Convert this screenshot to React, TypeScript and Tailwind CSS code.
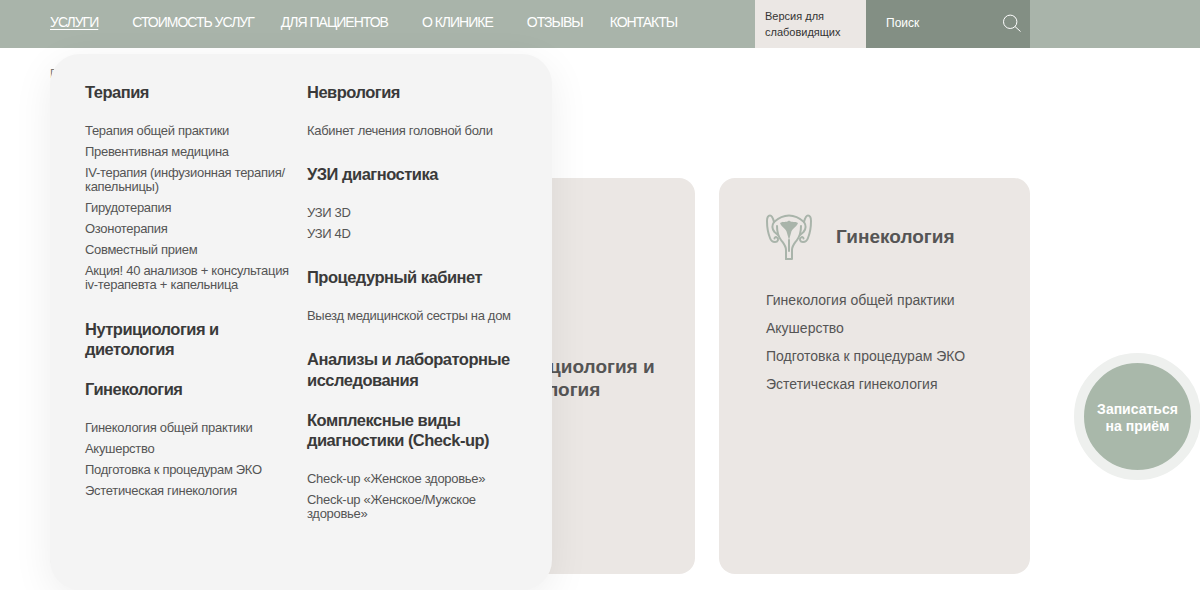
import React from "react";

const font = "font-['Liberation_Sans',sans-serif]";

const UterusIcon = () => (
  <svg width="46" height="48" viewBox="0 0 46 48" fill="none" stroke="#a9b4aa" strokeWidth="2" strokeLinecap="round" strokeLinejoin="round">
    <path d="M8 9C13 4.500 18 2.500 23 2.500S33 4.500 38 9" />
    <path d="M20 46h6v-9c0-4 2-6 5-10 3-4 4-8 4-14" />
    <path d="M20 46v-9c0-4-2-6-5-10-3-4-4-8-4-14" />
    <path d="M23 27v11" />
    <path d="M14 10c3-2 6 0 9-2.500 3 2.500 6 .5 9 2.500-2 5-6 5-7 10l-2 7-2-7c-1-5-5-5-7-10z" fill="#a9b4aa" stroke="none" />
    <path d="M8 9C7 5 6 2.500 4 2.500 2 2.500 1 5 1 8c0 6 1 12 3 17 1 3 3 4 5 4 3 0 4-3 2-4.500-1-1-2.500-.5-2.500 1" />
    <path d="M8 9c-2 3-2 7 .5 10l3.500 3" />
    <path d="M38 9c1-4 2-6.500 4-6.500 2 0 3 2.500 3 5.500 0 6-1 12-3 17-1 3-3 4-5 4-3 0-4-3-2-4.500 1-1 2.500-.5 2.500 1" />
    <path d="M38 9c2 3 2 7-.5 10l-3.500 3" />
  </svg>
);

const SearchIcon = () => (
  <svg width="18" height="18" viewBox="0 0 18 18" fill="none" stroke="#ffffff" strokeWidth="1">
    <circle cx="7.200" cy="7.800" r="6.700" />
    <path d="M12 12.500l5.500 5" />
  </svg>
);

const Heading = ({ children, className = "" }: { children: React.ReactNode; className?: string }) => (
  <h3 className={`text-[16.5px] font-bold tracking-[-0.5px] text-[#3a3a3a] ${className}`}>{children}</h3>
);

const Links = ({ items, className = "" }: { items: string[]; className?: string }) => (
  <ul className={`flex max-w-[212px] flex-col gap-[7px] text-[13px] leading-[14px] tracking-[-0.3px] text-[#555555] ${className}`}>
    {items.map((item) => (
      <li key={item}>{item}</li>
    ))}
  </ul>
);

const gyn = ["Гинекология общей практики", "Акушерство", "Подготовка к процедурам ЭКО", "Эстетическая гинекология"];

const ServicesMenu = () => (
  <div className="absolute left-[50px] top-[54px] z-10 flex h-[536px] w-[502px] rounded-[30px] bg-[#f4f4f4] pl-[35px] pt-[28px] shadow-[0_10px_40px_rgba(0,0,0,0.07)]">
    <div className="w-[222px]">
      <Heading className="leading-[21px]">Терапия</Heading>
      <Links
        className="mt-[21px]"
        items={[
          "Терапия общей практики",
          "Превентивная медицина",
          "IV-терапия (инфузионная терапия/ капельницы)",
          "Гирудотерапия",
          "Озонотерапия",
          "Совместный прием",
          "Акция! 40 анализов + консультация iv-терапевта + капельница",
        ]}
      />
      <Heading className="mt-[28px] leading-[19.5px]">Нутрициология и диетология</Heading>
      <Heading className="mt-[20px] leading-[21px]">Гинекология</Heading>
      <Links className="mt-[21px]" items={gyn} />
    </div>
    <div className="w-[210px]">
      <Heading className="leading-[21px]">Неврология</Heading>
      <Links className="mt-[21px]" items={["Кабинет лечения головной боли"]} />
      <Heading className="mt-[26px] leading-[21px]">УЗИ диагностика</Heading>
      <Links className="mt-[21px]" items={["УЗИ 3D", "УЗИ 4D"]} />
      <Heading className="mt-[26px] leading-[21px]">Процедурный кабинет</Heading>
      <Links className="mt-[21px]" items={["Выезд медицинской сестры на дом"]} />
      <Heading className="mt-[26px] leading-[21px]">Анализы и лабораторные исследования</Heading>
      <Heading className="mt-[20px] leading-[19.5px]">Комплексные виды диагностики (Check-up)</Heading>
      <Links className="mt-[22px]" items={["Check-up «Женское здоровье»", "Check-up «Женское/Мужское здоровье»"]} />
    </div>
  </div>
);

export default function App() {
  return (
    <div className={`relative h-[590px] w-[1200px] overflow-hidden bg-white ${font}`}>
      <header className="h-12 bg-[#a9b4aa]">
        <div className="ml-[50px] flex h-12 w-[980px] items-center text-[14px] text-white">
          <a className="pb-[3px] tracking-[-1px] underline underline-offset-2">УСЛУГИ</a>
          <a className="ml-[34px] pb-[3px] tracking-[-1px]">СТОИМОСТЬ УСЛУГ</a>
          <a className="ml-[27px] pb-[3px] tracking-[-1px]">ДЛЯ ПАЦИЕНТОВ</a>
          <a className="ml-[34px] pb-[3px] tracking-[-1px]">О КЛИНИКЕ</a>
          <a className="ml-[34px] pb-[3px] tracking-[-1px]">ОТЗЫВЫ</a>
          <a className="ml-[27px] pb-[3px] tracking-[-1px]">КОНТАКТЫ</a>
          <div className="ml-auto flex h-12 w-[111px] items-center bg-[#ebe7e4] pl-[10px] text-[11px] leading-[16px] text-[#333333]">
            Версия для<br />слабовидящих
          </div>
          <div className="flex h-12 w-[164px] items-center justify-between bg-[#838f84] pb-[2px] pl-[20px] pr-[9px] text-[12px]">
            <span>Поиск</span>
            <SearchIcon />
          </div>
        </div>
      </header>

      <main className="ml-[50px] w-[980px]">
        <div className="h-[130px] pt-[17px] text-[12px] text-[#777777]">Главная</div>
        <div className="grid h-[396px] grid-cols-[310px_311px_311px] gap-[24px]">
          <div className="rounded-[16px] bg-[#ebe7e4]" />
          <div className="rounded-[16px] bg-[#ebe7e4] pl-[108px] pt-[177px] text-[19px] leading-[23px] font-bold text-[#555555]">
            Нутрициология и диетология
          </div>
          <div className="rounded-[16px] bg-[#ebe7e4] pl-[47px] pt-[35px]">
            <div className="flex items-center gap-[24px]">
              <UterusIcon />
              <h2 className="text-[19px] font-bold text-[#555555]">Гинекология</h2>
            </div>
            <ul className="mt-[30px] flex flex-col gap-[10px] text-[14px] leading-[18px] text-[#555555]">
              {gyn.map((g) => (
                <li key={g}>{g}</li>
              ))}
            </ul>
          </div>
        </div>
      </main>

      <ServicesMenu />

      <button className="absolute left-[1074px] top-[353px] flex h-[127px] w-[127px] items-center justify-center rounded-full border-[10px] border-[#eef0ee] bg-[#a9b8aa] pt-[2px] text-[14px] leading-[17px] font-bold text-white">
        Записаться<br />на приём
      </button>
    </div>
  );
}
